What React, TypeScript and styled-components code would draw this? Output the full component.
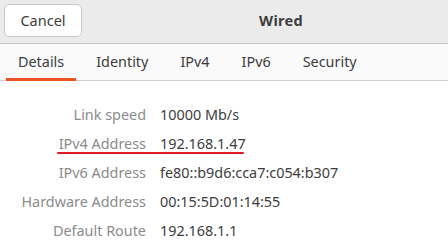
import { Fragment } from "react";
import styled, { createGlobalStyle } from "styled-components";

const GlobalStyle = createGlobalStyle`
  html, body {
    margin: 0;
    padding: 0;
    width: 448px;
    height: 248px;
    overflow: hidden;
    background: #ffffff;
    font-family: "Noto Sans", "Open Sans", sans-serif;
  }
`

const Window = styled.div`
  display: flex;
  flex-direction: column;
  width: 448px;
  height: 248px;
  background: #ffffff;
`

const HeaderBar = styled.div`
  display: grid;
  grid-template-columns: 1fr auto 1fr;
  align-items: center;
  height: 43px;
  padding: 0 4px;
  background: #ebebeb;
  border-bottom: 1px solid #c4c4c4;
`

const CancelButton = styled.button`
  justify-self: start;
  width: 78px;
  height: 33px;
  margin-top: -3px;
  border: 1px solid #cdc7c2;
  border-radius: 5px;
  background: #ffffff;
  color: #3d3d3d;
  font-family: inherit;
  font-size: 14.5px;
`

const Title = styled.div`
  margin-left: 114px;
  margin-top: -3px;
  font-size: 14.5px;
  font-weight: bold;
  letter-spacing: 0.3px;
  color: #3d3d3d;
`

const TabBar = styled.div`
  display: flex;
  gap: 8px;
  height: 36px;
  padding-left: 6px;
  background: #fafafa;
  border-bottom: 1px solid #cfcfcf;
`

const Tab = styled.div<{ $active?: boolean }>`
  display: flex;
  align-items: center;
  padding: 0 12px;
  margin-bottom: -1px;
  font-size: 14.4px;
  color: #3d3d3d;
  border-bottom: 3px solid ${p => (p.$active ? "#e95420" : "transparent")};
  box-sizing: border-box;
`

const Details = styled.div`
  display: grid;
  grid-template-columns: 146px auto;
  column-gap: 14px;
  grid-auto-rows: 29px;
  align-items: center;
  padding-top: 19px;
`

const Label = styled.div`
  position: relative;
  text-align: right;
  font-size: 14.4px;
  color: #8b8b8b;
`

const Value = styled.div`
  font-size: 14.4px;
  color: #3d3d3d;
`

const Underline = styled.span`
  position: absolute;
  left: 57px;
  top: 18px;
  width: 187px;
  height: 2px;
  background: #e01b24;
  border-radius: 1px;
`

const rows: [string, string][] = [
  ["Link speed", "10000 Mb/s"],
  ["IPv4 Address", "192.168.1.47"],
  ["IPv6 Address", "fe80::b9d6:cca7:c054:b307"],
  ["Hardware Address", "00:15:5D:01:14:55"],
  ["Default Route", "192.168.1.1"],
]

const tabs = ["Details", "Identity", "IPv4", "IPv6", "Security"]

const App = (): JSX.Element => {
  return (
    <>
      <GlobalStyle />
      <Window>
        <HeaderBar>
          <CancelButton>Cancel</CancelButton>
          <Title>Wired</Title>
        </HeaderBar>
        <TabBar>
          {tabs.map((t, i) => (
            <Tab key={t} $active={i === 0}>{t}</Tab>
          ))}
        </TabBar>
        <Details>
          {rows.map(([label, value], i) => (
            <Fragment key={label}>
              <Label>
                {label}
                {/* red mark under the IPv4 row */}
                {i === 1 && <Underline />}
              </Label>
              <Value>{value}</Value>
            </Fragment>
          ))}
        </Details>
      </Window>
    </>
  )
}

export default App;
